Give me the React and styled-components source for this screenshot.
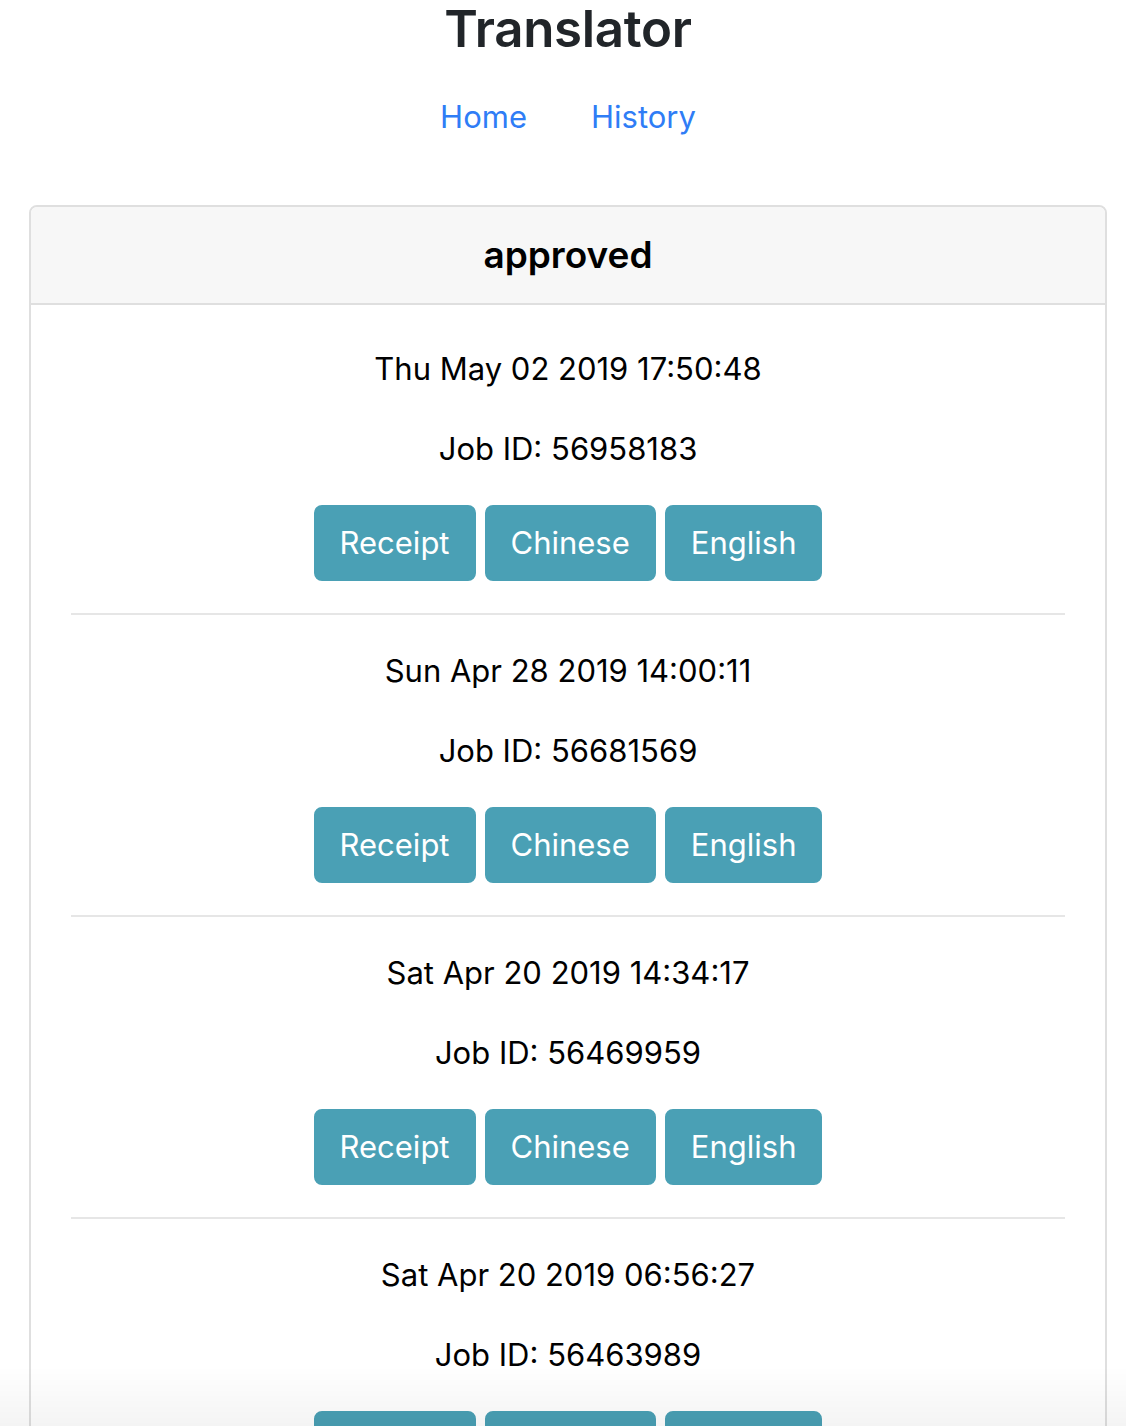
import React from 'react';
import styled, { createGlobalStyle } from 'styled-components';

const GlobalStyle = createGlobalStyle`
  html, body {
    margin: 0;
    padding: 0;
    background: #fff;
    font-family: Inter, "Noto Sans", "Liberation Sans", sans-serif;
    color: #212529;
  }
  * { box-sizing: border-box; }
`;

const Page = styled.div`
  padding: 0 19px 0 29px;
`;

const Title = styled.h1`
  margin: 0;
  text-align: center;
  font-size: 51px;
  font-weight: 600;
  line-height: 58px;
  letter-spacing: -0.3px;
  color: #212529;
`;

const Nav = styled.nav`
  display: flex;
  justify-content: center;
  margin-top: 19px;
`;

const NavLink = styled.a`
  padding: 16px 32px;
  font-size: 31px;
  line-height: 48px;
  color: #2f7df6;
  text-decoration: none;
`;

const Card = styled.section`
  margin-top: 48px;
  border: 2px solid #dfdfdf;
  border-radius: 8px;
  overflow: hidden;
`;

const CardHeader = styled.header`
  padding: 24px 40px;
  background: #f7f7f7;
  border-bottom: 2px solid #dfdfdf;
  text-align: center;
`;

const HeaderTitle = styled.h5`
  margin: 0;
  font-size: 37px;
  line-height: 48px;
  font-weight: 600;
  color: #000;
`;

const CardBody = styled.div`
  padding: 40px 40px 0;
`;

const Job = styled.div`
  text-align: center;
`;

const Line = styled.p`
  margin: 0 0 32px;
  font-size: 31px;
  line-height: 48px;
  color: #000;
`;

const Buttons = styled.div`
  display: flex;
  justify-content: center;
  gap: 9px;
`;

const Button = styled.button`
  padding: 12px 24px;
  border: 2px solid #4aa0b5;
  border-radius: 8px;
  background: #4aa0b5;
  color: #fff;
  font-family: inherit;
  font-size: 31px;
  line-height: 48px;
  cursor: pointer;
`;

const Divider = styled.hr`
  margin: 32px 0;
  border: 0;
  border-top: 2px solid #e6e6e6;
`;

const BottomFade = styled.div`
  position: fixed;
  left: 0;
  right: 0;
  bottom: 0;
  height: 60px;
  pointer-events: none;
  background: linear-gradient(to bottom, rgba(0, 0, 0, 0), rgba(0, 0, 0, 0.045));
`;

const jobs = [
  { date: 'Thu May 02 2019 17:50:48', id: '56958183' },
  { date: 'Sun Apr 28 2019 14:00:11', id: '56681569' },
  { date: 'Sat Apr 20 2019 14:34:17', id: '56469959' },
  { date: 'Sat Apr 20 2019 06:56:27', id: '56463989' },
];

export default function App() {
  return (
    <Page>
      <GlobalStyle />
      <Title>Translator</Title>
      <Nav>
        <NavLink href="#">Home</NavLink>
        <NavLink href="#">History</NavLink>
      </Nav>
      <Card>
        <CardHeader>
          <HeaderTitle>approved</HeaderTitle>
        </CardHeader>
        <CardBody>
          {jobs.map((job, i) => (
            <Job key={job.id}>
              <Line>{job.date}</Line>
              <Line>Job ID: {job.id}</Line>
              <Buttons>
                <Button>Receipt</Button>
                <Button>Chinese</Button>
                <Button>English</Button>
              </Buttons>
              {i < jobs.length - 1 && <Divider />}
            </Job>
          ))}
        </CardBody>
      </Card>
      <BottomFade />
    </Page>
  );
}
